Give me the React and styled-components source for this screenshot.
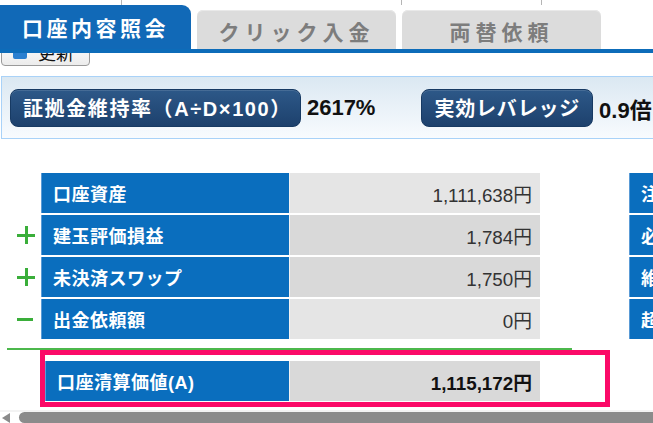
import styled, { createGlobalStyle } from "styled-components";

const GlobalStyle = createGlobalStyle`
  html, body {
    margin: 0;
    padding: 0;
    background: #ffffff;
    overflow: hidden;
  }
  body {
    font-family: "Liberation Sans", "Noto Sans CJK JP", sans-serif;
    color: #222;
  }
`;

const Page = styled.div`
  width: 653px;
  height: 423px;
  overflow: hidden;
  display: flex;
  flex-direction: column;
`;

const Wide = styled.div`
  width: 900px;
  display: flex;
  flex-direction: column;
`;

// thin cell borders of the row above, cut off by the screenshot
const TopStrip = styled.div`
  height: 5px;
  display: grid;
  grid-template-columns: 122px 280px 140px 1fr;
`;

const StripCell = styled.div`
  border-right: 1px solid ${(p) => (p.$last ? "transparent" : "#b5b5b5")};
`;

const TabBar = styled.div`
  height: 44px;
  display: flex;
  align-items: flex-end;
  gap: 6px;
  border-bottom: 4px solid #0d6cb9;
`;

const Tab = styled.div`
  width: ${(p) => (p.$active ? "191px" : "199px")};
  height: ${(p) => (p.$active ? "44px" : "39px")};
  display: flex;
  align-items: center;
  justify-content: center;
  background: ${(p) => (p.$active ? "#1169b7" : "#dcdcdc")};
  color: ${(p) => (p.$active ? "#ffffff" : "#7d7d7d")};
  border-radius: ${(p) => (p.$active ? "0 9px 0 0" : "6px 6px 0 0")};
  box-shadow: ${(p) => (p.$active ? "none" : "inset 0 1px 0 #e9e9e9")};
  font-size: 21px;
  font-weight: bold;
  letter-spacing: ${(p) => (p.$active ? "3.5px" : "5px")};
  padding-top: ${(p) => (p.$active ? "0" : "2px")};
  box-sizing: border-box;
`;

const ButtonStrip = styled.div`
  height: 13px;
  overflow: hidden;
  display: flex;
  align-items: flex-end;
  padding-left: 1px;
`;

const RefreshButton = styled.div`
  width: 89px;
  height: 28px;
  box-sizing: border-box;
  display: flex;
  align-items: center;
  gap: 11px;
  padding-left: 11px;
  border: 1px solid #9a9a9a;
  border-radius: 4px;
  background: linear-gradient(#ffffff, #ececec);
  font-size: 18px;
  color: #111;
`;

const RefreshIcon = styled.span`
  width: 14px;
  height: 14px;
  border-radius: 2px;
  background: #2a7fd0;
`;

const InfoBar = styled.div`
  margin-top: 10px;
  margin-left: 1px;
  height: 63px;
  box-sizing: border-box;
  border: 1px solid #a9d2f8;
  background: linear-gradient(#dbe8f2, #f8fbfe);
  display: flex;
  align-items: center;
  padding-left: 8px;
`;

const Badge = styled.div`
  height: 38px;
  box-sizing: border-box;
  display: flex;
  align-items: center;
  padding: 0 ${(p) => p.$padRight || "12px"} 0 12px;
  margin-left: ${(p) => p.$offset || "0"};
  border-radius: 8px;
  border: 1px solid #173a63;
  background: linear-gradient(#2d5888, #1d416d);
  box-shadow: inset 0 1px 0 rgba(255, 255, 255, 0.12);
  color: #ffffff;
  font-size: 20px;
  font-weight: bold;
  letter-spacing: ${(p) => p.$spacing || "1.6px"};
  white-space: nowrap;
`;

const BigValue = styled.span`
  margin-left: 6px;
  font-size: 22px;
  font-weight: bold;
  color: #111;
  white-space: nowrap;
`;

const Summary = styled.div`
  margin-top: 34px;
  display: flex;
  gap: 89px;
`;

const Rows = styled.div`
  display: flex;
  flex-direction: column;
  gap: 2px;
`;

const Row = styled.div`
  display: grid;
  grid-template-columns: ${(p) => p.$cols || "41px 248px 251px"};
  height: 40px;
`;

const Sign = styled.div`
  display: flex;
  align-items: center;
  justify-content: flex-end;
  padding-right: 6px;
`;

const Plus = styled.span`
  position: relative;
  width: 18px;
  height: 18px;
  &::before,
  &::after {
    content: "";
    position: absolute;
    background: #3aae3a;
  }
  &::before {
    left: 0;
    top: 7.5px;
    width: 18px;
    height: 3px;
  }
  &::after {
    top: 0;
    left: 7.5px;
    width: 3px;
    height: 18px;
  }
`;

const Minus = styled.span`
  width: 16px;
  height: 3px;
  margin-right: 2px;
  background: #3aae3a;
`;

const Label = styled.div`
  display: flex;
  align-items: center;
  padding-left: 11px;
  background: #0a6ebe;
  border-left: 1px solid #5a9bd6;
  color: #ffffff;
  font-size: 18px;
  font-weight: bold;
  letter-spacing: 0.5px;
  white-space: nowrap;
  overflow: hidden;
`;

const Value = styled.div`
  display: flex;
  align-items: center;
  justify-content: flex-end;
  padding-right: 8px;
  background: ${(p) => (p.$dark ? "#d9d9d9" : "#e5e5e5")};
  border-left: 1px solid #f2f2f2;
  font-size: 18.8px;
  font-weight: ${(p) => (p.$bold ? "bold" : "normal")};
  color: ${(p) => (p.$bold ? "#111" : "#333")};
`;

const SideLabel = styled(Label)`
  width: 140px;
  height: 40px;
  box-sizing: border-box;
`;

const GreenRule = styled.div`
  margin-top: 9px;
  margin-left: 7px;
  width: 565px;
  height: 2px;
  background: #4cb84c;
`;

const Highlight = styled.div`
  margin-left: 40px;
  width: 570px;
  box-sizing: border-box;
  border: 5px solid #fb0a68;
  padding: 6px 0 1px 0;
`;

const ScrollTrack = styled.div`
  margin-top: 3px;
  height: 13px;
  box-sizing: border-box;
  border-top: 2px solid #f3f3f3;
  display: flex;
  align-items: stretch;
  gap: 9px;
  padding-left: 2px;
`;

const ScrollArrow = styled.span`
  align-self: center;
  width: 0;
  height: 0;
  border-top: 5px solid transparent;
  border-bottom: 5px solid transparent;
  border-right: 8px solid #8a8a8a;
`;

const ScrollThumb = styled.div`
  flex: 1;
  background: #8b8b8b;
  border-radius: 6px 0 0 6px;
`;

const rows = [
  { sign: null, label: "口座資産", value: "1,111,638円", dark: false, side: "注文証拠金" },
  { sign: "plus", label: "建玉評価損益", value: "1,784円", dark: true, side: "必要証拠金" },
  { sign: "plus", label: "未決済スワップ", value: "1,750円", dark: true, side: "維持証拠金" },
  { sign: "minus", label: "出金依頼額", value: "0円", dark: false, side: "超過証拠金" },
];

export default function App() {
  return (
    <Page>
      <GlobalStyle />
      <Wide>
        <TopStrip>
          <StripCell />
          <StripCell />
          <StripCell />
          <StripCell $last />
        </TopStrip>

        <TabBar>
          <Tab $active>口座内容照会</Tab>
          <Tab>クリック入金</Tab>
          <Tab>両替依頼</Tab>
        </TabBar>

        <ButtonStrip>
          <RefreshButton>
            <RefreshIcon />
            更新
          </RefreshButton>
        </ButtonStrip>

        <InfoBar>
          <Badge $padRight="8px">証拠金維持率（A÷D×100）</Badge>
          <BigValue>2617%</BigValue>
          <Badge $offset="46px" $spacing="0.8px" $padRight="12px">
            実効レバレッジ
          </Badge>
          <BigValue>0.9倍</BigValue>
        </InfoBar>

        <Summary>
          <Rows>
            {rows.map((r) => (
              <Row key={r.label}>
                <Sign>
                  {r.sign === "plus" && <Plus />}
                  {r.sign === "minus" && <Minus />}
                </Sign>
                <Label>{r.label}</Label>
                <Value $dark={r.dark}>{r.value}</Value>
              </Row>
            ))}
          </Rows>
          <Rows>
            {rows.map((r) => (
              <SideLabel key={r.side}>{r.side}</SideLabel>
            ))}
          </Rows>
        </Summary>

        <GreenRule />

        <Highlight>
          <Row $cols="244px 251px">
            <Label>口座清算価値(A)</Label>
            <Value $dark $bold>
              1,115,172円
            </Value>
          </Row>
        </Highlight>

        <ScrollTrack>
          <ScrollArrow />
          <ScrollThumb />
        </ScrollTrack>
      </Wide>
    </Page>
  );
}
